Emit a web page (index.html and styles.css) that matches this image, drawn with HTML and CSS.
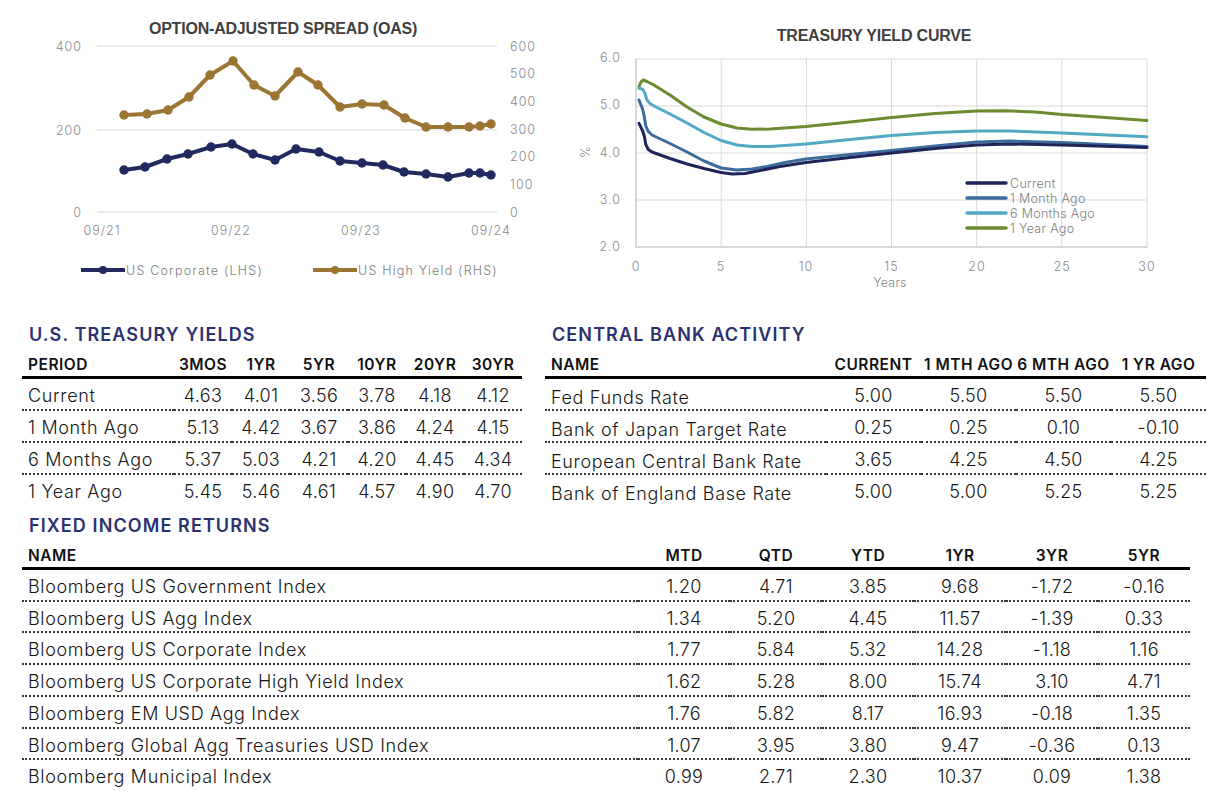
FILE: index.html
```html
<!DOCTYPE html>
<html lang="en">
<head>
<meta charset="utf-8">
<title>Fixed Income Dashboard</title>
<link rel="stylesheet" href="styles.css">
</head>
<body>
<div class="page">
  <div class="charts">
    <svg class="chart chart-oas" width="545" height="300" viewBox="0 0 545 300">
      <text class="chart-title" x="283" y="34" text-anchor="middle">OPTION-ADJUSTED SPREAD (OAS)</text>
      <g class="grid">
        <line x1="97" x2="497" y1="46" y2="46"/>
        <line x1="97" x2="497" y1="130" y2="130"/>
        <line x1="97" x2="497" y1="212" y2="212"/>
      </g>
      <g class="axis-label" text-anchor="end">
        <text x="82" y="50.5">400</text>
        <text x="82" y="134.5">200</text>
        <text x="82" y="216.5">0</text>
      </g>
      <g class="axis-label" text-anchor="start">
        <text x="510" y="50.5">600</text>
        <text x="510" y="78">500</text>
        <text x="510" y="106">400</text>
        <text x="510" y="133.5">300</text>
        <text x="510" y="161">200</text>
        <text x="510" y="189">100</text>
        <text x="510" y="216.5">0</text>
      </g>
      <g class="axis-label" text-anchor="middle">
        <text x="102" y="234.5">09/21</text>
        <text x="231" y="234.5">09/22</text>
        <text x="361" y="234.5">09/23</text>
        <text x="491" y="234.5">09/24</text>
      </g>
      <polyline class="oas-line hy" points="124,115 147,114 168,110 189,97 210,75 233,61 254,85 275,96 298,72 318,85 340,107 362,104 384,105 405,118 426,127 448,127 469,127 480,126 491,124"/>
      <g class="dots hy">
        <circle cx="124" cy="115" r="4.7"/><circle cx="147" cy="114" r="4.7"/><circle cx="168" cy="110" r="4.7"/><circle cx="189" cy="97" r="4.7"/><circle cx="210" cy="75" r="4.7"/><circle cx="233" cy="61" r="4.7"/><circle cx="254" cy="85" r="4.7"/><circle cx="275" cy="96" r="4.7"/><circle cx="298" cy="72" r="4.7"/><circle cx="318" cy="85" r="4.7"/><circle cx="340" cy="107" r="4.7"/><circle cx="362" cy="104" r="4.7"/><circle cx="384" cy="105" r="4.7"/><circle cx="405" cy="118" r="4.7"/><circle cx="426" cy="127" r="4.7"/><circle cx="448" cy="127" r="4.7"/><circle cx="469" cy="127" r="4.7"/><circle cx="480" cy="126" r="4.7"/><circle cx="491" cy="124" r="4.7"/>
      </g>
      <polyline class="oas-line ig" points="124,170 145,167 167,159 188,154 211,147 232,144 253,154 275,160 296,149 319,152 340,161 362,163 383,165 404,172 426,174 448,177 469,173 480,173 491,175"/>
      <g class="dots ig">
        <circle cx="124" cy="170" r="4.7"/><circle cx="145" cy="167" r="4.7"/><circle cx="167" cy="159" r="4.7"/><circle cx="188" cy="154" r="4.7"/><circle cx="211" cy="147" r="4.7"/><circle cx="232" cy="144" r="4.7"/><circle cx="253" cy="154" r="4.7"/><circle cx="275" cy="160" r="4.7"/><circle cx="296" cy="149" r="4.7"/><circle cx="319" cy="152" r="4.7"/><circle cx="340" cy="161" r="4.7"/><circle cx="362" cy="163" r="4.7"/><circle cx="383" cy="165" r="4.7"/><circle cx="404" cy="172" r="4.7"/><circle cx="426" cy="174" r="4.7"/><circle cx="448" cy="177" r="4.7"/><circle cx="469" cy="173" r="4.7"/><circle cx="480" cy="173" r="4.7"/><circle cx="491" cy="175" r="4.7"/>
      </g>
      <g class="legend">
        <line class="oas-line ig" x1="81" x2="125" y1="270" y2="270"/>
        <circle class="dot-ig" cx="103" cy="270" r="4"/>
        <text class="legend-text wide" x="126" y="274.5">US Corporate (LHS)</text>
        <line class="oas-line hy" x1="313" x2="357" y1="270" y2="270"/>
        <circle class="dot-hy" cx="335" cy="270" r="4"/>
        <text class="legend-text wide" x="358" y="274.5">US High Yield (RHS)</text>
      </g>
    </svg>

    <svg class="chart chart-yc" width="668" height="300" viewBox="545 0 668 300">
      <text class="chart-title" x="874" y="40.5" text-anchor="middle">TREASURY YIELD CURVE</text>
      <g class="grid">
        <line x1="636" x2="1147" y1="106" y2="106"/>
        <line x1="636" x2="1147" y1="153" y2="153"/>
        <line x1="636" x2="1147" y1="200" y2="200"/>
        <line x1="721.2" x2="721.2" y1="59" y2="247"/>
        <line x1="806.3" x2="806.3" y1="59" y2="247"/>
        <line x1="891.5" x2="891.5" y1="59" y2="247"/>
        <line x1="976.7" x2="976.7" y1="59" y2="247"/>
        <line x1="1061.8" x2="1061.8" y1="59" y2="247"/>
        <rect x="636" y="59" width="511" height="188" fill="none"/>
      </g>
      <g class="axis-line">
        <line x1="636" x2="636" y1="59" y2="247.5"/>
        <line x1="635.5" x2="1147" y1="247" y2="247"/>
      </g>
      <g class="axis-label" text-anchor="end">
        <text x="621" y="61.5">6.0</text>
        <text x="621" y="108.5">5.0</text>
        <text x="621" y="156.5">4.0</text>
        <text x="621" y="203.5">3.0</text>
        <text x="621" y="250.5">2.0</text>
      </g>
      <g class="axis-label" text-anchor="middle">
        <text x="636" y="270.5">0</text>
        <text x="721" y="270.5">5</text>
        <text x="806" y="270.5">10</text>
        <text x="891.5" y="270.5">15</text>
        <text x="977" y="270.5">20</text>
        <text x="1062" y="270.5">25</text>
        <text x="1147" y="270.5">30</text>
        <text class="axis-title" x="890" y="286.5">Years</text>
        <text class="axis-title" x="585" y="156.5" transform="rotate(-90 585 152)">%</text>
      </g>
      <polyline class="curve y1" points="639,86.7 641,82 643.3,80 647,81.5 653,84.5 670,95 687,107 704,117 721,124 737,128 752,129.3 770,129 806,126.5 850,122 891.5,117.5 935,113.5 976.6,111 1005,110.7 1035,112 1062,114.5 1105,117.5 1147,120.5"/>
      <polyline class="curve m6" points="639,88.3 642.7,89.3 645,93.5 647,100 650,103.5 655,106.5 670,114 687,123 704,132.5 721,140.5 737,145 752,146.5 770,146.5 806,144 850,139.5 891.5,135.5 935,132.5 976.6,131 1010,131 1062,133 1147,136.7"/>
      <polyline class="curve m1" points="639,100 642.7,109.5 644.4,117 645.8,126 648,131 652,135 670,143.5 687,152 704,161 721,168 737,170 752,169 767,166.5 785,162.5 806,159 850,154.5 891.5,150.5 935,146 976.6,142 1010,141 1062,142.5 1147,146.5"/>
      <polyline class="curve cur" points="639,123.3 642.7,131 644.5,137 645.8,144.5 648.3,149.5 652,152 670,158.5 687,164 704,168.5 721,172.5 732,174 745,173.5 760,170.5 780,166.5 806,162.5 850,157.5 891.5,153 935,148.5 976.6,145 1010,144 1062,145 1147,147.4"/>
      <g class="legend">
        <line class="curve cur" x1="967" x2="1006" y1="183" y2="183"/>
        <text class="legend-text" x="1010" y="187.5">Current</text>
        <line class="curve m1" x1="967" x2="1006" y1="198" y2="198"/>
        <text class="legend-text" x="1010" y="202.5">1 Month Ago</text>
        <line class="curve m6" x1="967" x2="1006" y1="213" y2="213"/>
        <text class="legend-text" x="1010" y="217.5">6 Months Ago</text>
        <line class="curve y1" x1="967" x2="1006" y1="228" y2="228"/>
        <text class="legend-text" x="1010" y="232.5">1 Year Ago</text>
      </g>
    </svg>
  </div>

  <div class="tables-top">
    <section class="panel panel-treasury">
      <h2 class="panel-title">U.S. TREASURY YIELDS</h2>
      <table class="data treasury">
        <colgroup><col class="c-name"><col><col><col><col><col><col></colgroup>
        <thead>
          <tr><th class="name">PERIOD</th><th>3MOS</th><th>1YR</th><th>5YR</th><th>10YR</th><th>20YR</th><th>30YR</th></tr>
        </thead>
        <tbody>
          <tr><td class="name">Current</td><td>4.63</td><td>4.01</td><td>3.56</td><td>3.78</td><td>4.18</td><td>4.12</td></tr>
          <tr><td class="name">1 Month Ago</td><td>5.13</td><td>4.42</td><td>3.67</td><td>3.86</td><td>4.24</td><td>4.15</td></tr>
          <tr><td class="name">6 Months Ago</td><td>5.37</td><td>5.03</td><td>4.21</td><td>4.20</td><td>4.45</td><td>4.34</td></tr>
          <tr><td class="name">1 Year Ago</td><td>5.45</td><td>5.46</td><td>4.61</td><td>4.57</td><td>4.90</td><td>4.70</td></tr>
        </tbody>
      </table>
    </section>

    <section class="panel panel-cb">
      <h2 class="panel-title">CENTRAL BANK ACTIVITY</h2>
      <table class="data cb">
        <colgroup><col class="c-name"><col><col><col><col></colgroup>
        <thead>
          <tr><th class="name">NAME</th><th>CURRENT</th><th>1 MTH AGO</th><th>6 MTH AGO</th><th>1 YR AGO</th></tr>
        </thead>
        <tbody>
          <tr><td class="name">Fed Funds Rate</td><td>5.00</td><td>5.50</td><td>5.50</td><td>5.50</td></tr>
          <tr><td class="name">Bank of Japan Target Rate</td><td>0.25</td><td>0.25</td><td>0.10</td><td>-0.10</td></tr>
          <tr><td class="name">European Central Bank Rate</td><td>3.65</td><td>4.25</td><td>4.50</td><td>4.25</td></tr>
          <tr><td class="name">Bank of England Base Rate</td><td>5.00</td><td>5.00</td><td>5.25</td><td>5.25</td></tr>
        </tbody>
      </table>
    </section>
  </div>

  <section class="panel panel-fi">
    <h2 class="panel-title">FIXED INCOME RETURNS</h2>
    <table class="data fi">
      <colgroup><col class="c-name"><col><col><col><col><col><col></colgroup>
      <thead>
        <tr><th class="name">NAME</th><th>MTD</th><th>QTD</th><th>YTD</th><th>1YR</th><th>3YR</th><th>5YR</th></tr>
      </thead>
      <tbody>
        <tr><td class="name">Bloomberg US Government Index</td><td>1.20</td><td>4.71</td><td>3.85</td><td>9.68</td><td>-1.72</td><td>-0.16</td></tr>
        <tr><td class="name">Bloomberg US Agg Index</td><td>1.34</td><td>5.20</td><td>4.45</td><td>11.57</td><td>-1.39</td><td>0.33</td></tr>
        <tr><td class="name">Bloomberg US Corporate Index</td><td>1.77</td><td>5.84</td><td>5.32</td><td>14.28</td><td>-1.18</td><td>1.16</td></tr>
        <tr><td class="name">Bloomberg US Corporate High Yield Index</td><td>1.62</td><td>5.28</td><td>8.00</td><td>15.74</td><td>3.10</td><td>4.71</td></tr>
        <tr><td class="name">Bloomberg EM USD Agg Index</td><td>1.76</td><td>5.82</td><td>8.17</td><td>16.93</td><td>-0.18</td><td>1.35</td></tr>
        <tr><td class="name">Bloomberg Global Agg Treasuries USD Index</td><td>1.07</td><td>3.95</td><td>3.80</td><td>9.47</td><td>-0.36</td><td>0.13</td></tr>
        <tr><td class="name">Bloomberg Municipal Index</td><td>0.99</td><td>2.71</td><td>2.30</td><td>10.37</td><td>0.09</td><td>1.38</td></tr>
      </tbody>
    </table>
  </section>
</div>
</body>
</html>
```

FILE: styles.css
```css
html, body {
  margin: 0;
  padding: 0;
  background: #ffffff;
}

body {
  font-family: Inter, "Open Sans", "Liberation Sans", sans-serif;
  color: #1e1e1e;
  width: 1213px;
  height: 804px;
  overflow: hidden;
}

.page {
  width: 1213px;
}

/* ---------- charts ---------- */
.charts {
  display: flex;
  height: 300px;
}

.chart {
  display: block;
  flex: none;
}

.chart-title {
  font-family: "Liberation Sans", Arial, sans-serif;
  font-weight: 700;
  font-size: 16px;
  letter-spacing: -0.2px;
  fill: #3f3f3f;
}

.grid line,
.grid rect {
  stroke: #d9d9d9;
  stroke-width: 1;
}

.axis-line line {
  stroke: #c6c6c6;
  stroke-width: 1;
}

.axis-label {
  font-family: Inter, "Open Sans", sans-serif;
  font-size: 12.5px;
  font-weight: 300;
  letter-spacing: 1px;
  fill: #8a8a8a;
}

.axis-title {
  letter-spacing: 0.2px;
}

.oas-line {
  fill: none;
  stroke-width: 4;
  stroke-linejoin: round;
  stroke-linecap: round;
}

.oas-line.hy { stroke: #9c7534; }
.oas-line.ig { stroke: #212a5e; }
.dots.hy, .dot-hy { fill: #9c7534; }
.dots.ig, .dot-ig { fill: #212a5e; }

.legend line.oas-line {
  stroke-linecap: butt;
}

.legend-text {
  font-family: Inter, "Open Sans", sans-serif;
  font-size: 12.5px;
  font-weight: 300;
  letter-spacing: 0.3px;
  fill: #808080;
}

.legend-text.wide {
  letter-spacing: 1.2px;
}

.curve {
  fill: none;
  stroke-width: 3;
  stroke-linejoin: round;
  stroke-linecap: round;
}

.legend .curve {
  stroke-width: 3.5;
}

.curve.cur { stroke: #1f2559; }
.curve.m1  { stroke: #3a6d9b; }
.curve.m6  { stroke: #52a8c5; }
.curve.y1  { stroke: #6c8a2f; }

/* ---------- tables ---------- */
.tables-top {
  display: flex;
  gap: 23px;
  padding: 24px 0 0 22px;
}

.panel-fi {
  margin: 10px 0 0 22px;
  width: 1168px;
}

.panel-treasury { width: 500px; }
.panel-cb { width: 661px; }

.panel-title {
  margin: 0;
  padding-left: 7px;
  font-family: Inter, "Open Sans", sans-serif;
  font-weight: 600;
  font-size: 18px;
  line-height: 22px;
  letter-spacing: 1.1px;
  color: #2c3170;
}

.data {
  width: 100%;
  border-collapse: collapse;
  table-layout: fixed;
}

.data th {
  font-weight: 600;
  font-size: 15.5px;
  line-height: 22px;
  letter-spacing: 0.5px;
  color: #111111;
  text-align: center;
  padding: 8px 0 0;
  border-bottom: 3px solid #000000;
  white-space: nowrap;
}

.data td {
  font-weight: 300;
  font-size: 18px;
  line-height: 26px;
  letter-spacing: 0.3px;
  text-align: center;
  padding: 4px 0 0;
  border-bottom: 2px dotted #3a3a3a;
  white-space: nowrap;
  color: #161616;
}

.data tbody tr:last-child td {
  border-bottom: none;
}

.data .name {
  text-align: left;
  padding-left: 6px;
}

.data td.name {
  letter-spacing: 0.65px;
}

.treasury .c-name { width: 152px; }
.cb .c-name { width: 281px; }
.fi .c-name { width: 616px; }

.cb td.name {
  padding-top: 7px;
  line-height: 23px;
}

.fi td {
  line-height: 25.7px;
}
```
